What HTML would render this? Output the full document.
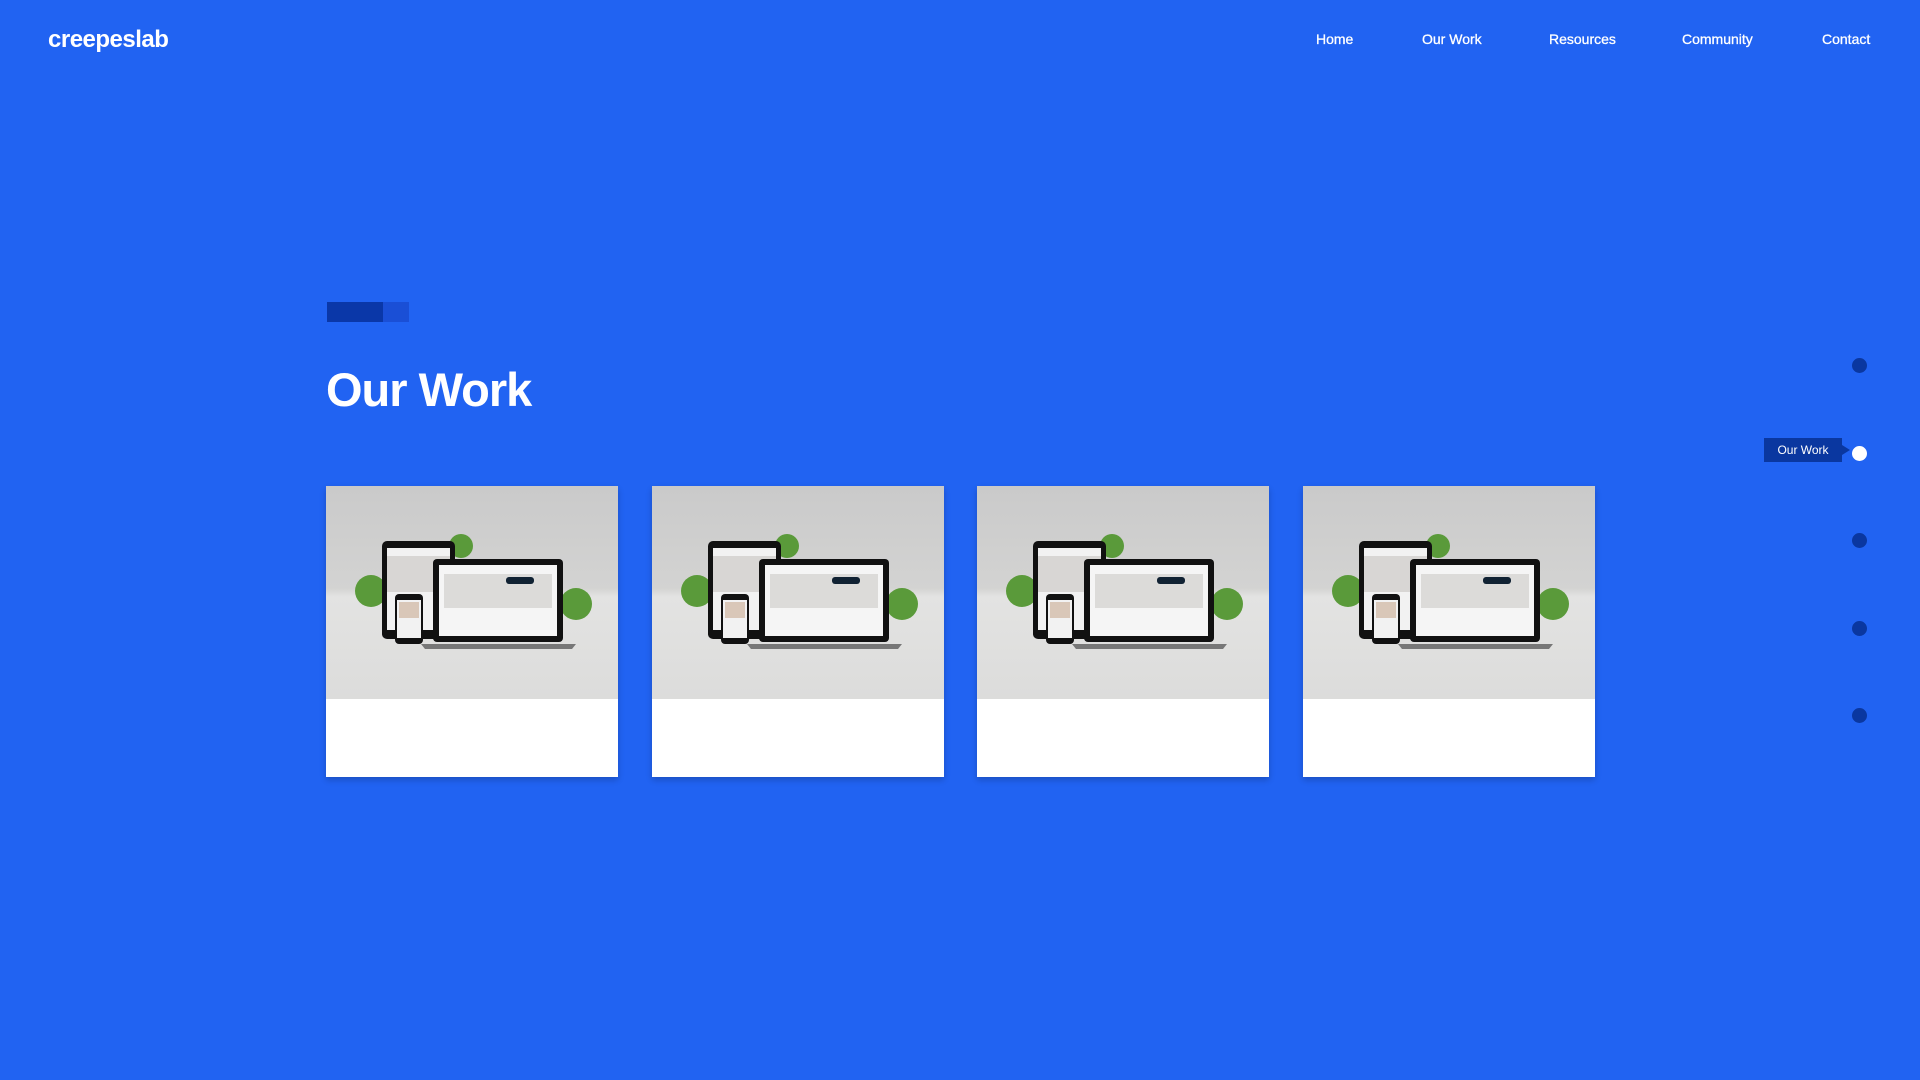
<!DOCTYPE html>
<html><head><style>
*{margin:0;padding:0;box-sizing:border-box}
body{width:1920px;height:1080px;background:#2163f2;font-family:"Liberation Sans",sans-serif;position:relative;overflow:hidden;color:#fff}
.logo{position:absolute;left:48px;top:26px;font-size:24px;font-weight:bold;letter-spacing:-0.5px}
.nav a{position:absolute;top:31px;font-size:14px;color:#fff;text-decoration:none;-webkit-text-stroke:0.3px #fff}
.bar{position:absolute;left:327px;top:302px;width:82px;height:20px;background:#1a4fd6}
.bar i{display:block;width:56px;height:20px;background:#0a37a8}
h1{position:absolute;left:326px;top:362px;font-size:47px;font-weight:bold;letter-spacing:-1px}
.card{position:absolute;top:486px;width:292px;height:291px;background:#fff;box-shadow:0 3px 6px rgba(0,0,0,.2)}
.card .img{height:213px;background:linear-gradient(#cacaca 0%,#d3d3d2 48%,#e3e3e2 52%,#dcdcdb 100%);position:relative;overflow:hidden}
.dot{position:absolute;left:1852px;width:15px;height:15px;border-radius:50%;background:#0a37a0}
.tip{position:absolute;left:1764px;top:438px;width:78px;height:24px;background:#0a37a0;font-size:12px;line-height:24px;text-align:center}
.tip:after{content:"";position:absolute;right:-8px;top:7px;border-left:8px solid #0a37a0;border-top:5px solid transparent;border-bottom:5px solid transparent}
</style></head><body>
<div class="logo">creepeslab</div>
<div class="nav"><a style="left:1316px">Home</a><a style="left:1422px">Our Work</a><a style="left:1549px">Resources</a><a style="left:1682px">Community</a><a style="left:1822px">Contact</a></div>
<div class="bar"><i></i></div>
<h1>Our Work</h1>
<div class="card" style="left:326px"><div class="img">
<svg width="292" height="213" viewBox="0 0 292 213">
<g fill="#5a9a3a"><circle cx="45" cy="105" r="16"/><circle cx="135" cy="60" r="12"/><circle cx="250" cy="118" r="16"/></g>
<rect x="56" y="55" width="73" height="98" rx="5" fill="#111"/><rect x="61" y="62" width="63" height="82" fill="#f2f2f2"/><rect x="61" y="70" width="63" height="36" fill="#d8d6d4"/>
<rect x="107" y="73" width="130" height="83" rx="4" fill="#111"/><rect x="113" y="79" width="118" height="71" fill="#f5f5f5"/><rect x="118" y="88" width="108" height="34" fill="#dcdbd9"/><rect x="180" y="91" width="28" height="7" rx="3" fill="#123"/>
<path d="M95 158 L250 158 L246 163 L99 163Z" fill="#777"/>
<rect x="69" y="108" width="28" height="50" rx="4" fill="#111"/><rect x="71" y="114" width="24" height="38" fill="#f2f2f2"/><rect x="73" y="116" width="20" height="16" fill="#d9c7b8"/>
</svg></div></div>
<div class="card" style="left:652px"><div class="img">
<svg width="292" height="213" viewBox="0 0 292 213">
<g fill="#5a9a3a"><circle cx="45" cy="105" r="16"/><circle cx="135" cy="60" r="12"/><circle cx="250" cy="118" r="16"/></g>
<rect x="56" y="55" width="73" height="98" rx="5" fill="#111"/><rect x="61" y="62" width="63" height="82" fill="#f2f2f2"/><rect x="61" y="70" width="63" height="36" fill="#d8d6d4"/>
<rect x="107" y="73" width="130" height="83" rx="4" fill="#111"/><rect x="113" y="79" width="118" height="71" fill="#f5f5f5"/><rect x="118" y="88" width="108" height="34" fill="#dcdbd9"/><rect x="180" y="91" width="28" height="7" rx="3" fill="#123"/>
<path d="M95 158 L250 158 L246 163 L99 163Z" fill="#777"/>
<rect x="69" y="108" width="28" height="50" rx="4" fill="#111"/><rect x="71" y="114" width="24" height="38" fill="#f2f2f2"/><rect x="73" y="116" width="20" height="16" fill="#d9c7b8"/>
</svg></div></div>
<div class="card" style="left:977px"><div class="img">
<svg width="292" height="213" viewBox="0 0 292 213">
<g fill="#5a9a3a"><circle cx="45" cy="105" r="16"/><circle cx="135" cy="60" r="12"/><circle cx="250" cy="118" r="16"/></g>
<rect x="56" y="55" width="73" height="98" rx="5" fill="#111"/><rect x="61" y="62" width="63" height="82" fill="#f2f2f2"/><rect x="61" y="70" width="63" height="36" fill="#d8d6d4"/>
<rect x="107" y="73" width="130" height="83" rx="4" fill="#111"/><rect x="113" y="79" width="118" height="71" fill="#f5f5f5"/><rect x="118" y="88" width="108" height="34" fill="#dcdbd9"/><rect x="180" y="91" width="28" height="7" rx="3" fill="#123"/>
<path d="M95 158 L250 158 L246 163 L99 163Z" fill="#777"/>
<rect x="69" y="108" width="28" height="50" rx="4" fill="#111"/><rect x="71" y="114" width="24" height="38" fill="#f2f2f2"/><rect x="73" y="116" width="20" height="16" fill="#d9c7b8"/>
</svg></div></div>
<div class="card" style="left:1303px"><div class="img">
<svg width="292" height="213" viewBox="0 0 292 213">
<g fill="#5a9a3a"><circle cx="45" cy="105" r="16"/><circle cx="135" cy="60" r="12"/><circle cx="250" cy="118" r="16"/></g>
<rect x="56" y="55" width="73" height="98" rx="5" fill="#111"/><rect x="61" y="62" width="63" height="82" fill="#f2f2f2"/><rect x="61" y="70" width="63" height="36" fill="#d8d6d4"/>
<rect x="107" y="73" width="130" height="83" rx="4" fill="#111"/><rect x="113" y="79" width="118" height="71" fill="#f5f5f5"/><rect x="118" y="88" width="108" height="34" fill="#dcdbd9"/><rect x="180" y="91" width="28" height="7" rx="3" fill="#123"/>
<path d="M95 158 L250 158 L246 163 L99 163Z" fill="#777"/>
<rect x="69" y="108" width="28" height="50" rx="4" fill="#111"/><rect x="71" y="114" width="24" height="38" fill="#f2f2f2"/><rect x="73" y="116" width="20" height="16" fill="#d9c7b8"/>
</svg></div></div>
<div class="dot" style="top:358px"></div>
<div class="dot" style="top:446px;background:#fff"></div>
<div class="dot" style="top:533px"></div>
<div class="dot" style="top:621px"></div>
<div class="dot" style="top:708px"></div>
<div class="tip">Our Work</div>
</body></html>
